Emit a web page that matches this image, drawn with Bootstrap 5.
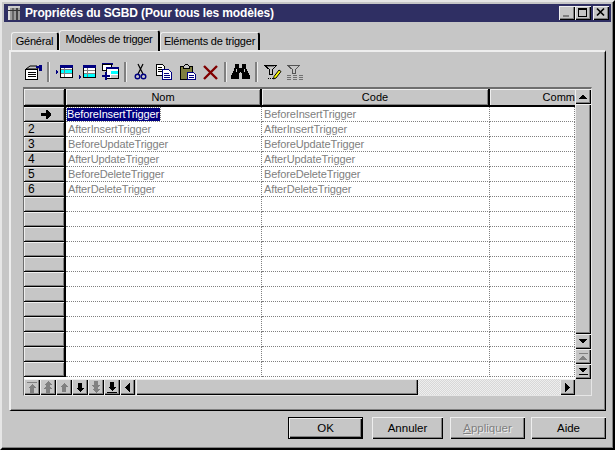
<!DOCTYPE html>
<html lang="fr"><head><meta charset="utf-8"><title>Propriétés du SGBD</title>
<link rel="stylesheet" href="https://cdn.jsdelivr.net/npm/bootstrap@5.3.0/dist/css/bootstrap.min.css">
<style>
html,body{margin:0;width:615px;height:450px;overflow:hidden;background:#c6c6c6}
body{font-family:"Liberation Sans",Arial,sans-serif;font-size:11px;line-height:13px;color:#000}
svg{display:block;shape-rendering:crispEdges}
.dlg{width:615px;height:450px;background:#c6c6c6;border-style:solid;border-width:2px;border-color:#e6e6e6 #000 #000 #e6e6e6;box-shadow:inset -1px -1px 0 #808080;padding:2px 2px 0 2px}
.capt{height:18px;background:#2f2f63;color:#fff;font-weight:700;font-size:12px;letter-spacing:-.14px;padding-left:3px;gap:4px}
.wbtns{margin-left:auto;margin-right:2px;gap:0}
.wb{width:16px;height:14px;background:#c6c6c6;box-shadow:inset 1px 1px 0 #eee,inset -1px -1px 0 #000,inset -2px -2px 0 #808080;padding:0;border:0;border-radius:0}
.wb.gapx{margin-left:2px}
.tabsx{margin:7px 0 0 7px;height:21px;border:0;align-items:flex-end;gap:0;flex-wrap:nowrap}
.tabsx .nav-link{font-size:11px;letter-spacing:-.22px;white-space:nowrap;line-height:13px;color:#000;background:#c6c6c6;border-radius:3px 3px 0 0;border:0;border-left:1px solid #eee;border-top:1px solid #eee;border-right:2px solid #000;margin:0;padding:2px 0 0 0;height:18px;text-align:center;display:block}
.tabsx .nav-link.active{color:#000;background:#c6c6c6;height:21px;padding-top:2px;margin-bottom:-1px;position:relative;z-index:2;border-left:1px solid #eee;border-top:1px solid #eee;border-right:2px solid #000;border-bottom:0}
.t1{width:48px}.t2{width:101px}.t3{width:100px}
.pane{width:597px;height:361px;margin-left:5px;border-style:solid;border-width:2px 1px 1px 2px;border-color:#eee #000 #000 #eee;box-shadow:inset -1px -1px 0 #808080;padding:6px 13px 0 12px}
.tbar{height:28px;align-items:center;margin-left:-2px}
.ti{width:23px;height:18px;padding:0;border:0;background:none;border-radius:0}
.tsep{width:8px;height:20px}
.tsep::after{content:"";display:block;width:2px;height:20px;margin:0 auto;background:#808080;box-shadow:1px 0 0 #eee}
.gridf{width:569px;height:309px;margin-top:1px;border-style:solid;border-width:2px 1px 1px 1px;border-color:#6e6e6e #e6e6e6 #e6e6e6 #6e6e6e}
.gclip{width:551px;height:290px;overflow:hidden;background:#fff}
table.gt{table-layout:fixed;width:551px;border-collapse:separate;border-spacing:0;margin:0;font-size:11px}
table.gt th,table.gt td{padding:0 0 0 2px;overflow:hidden;white-space:nowrap;font-weight:400}
table.gt thead th{height:18px;background:#c6c6c6;text-align:center;border-right:2px solid #000;border-bottom:2px solid #000;box-shadow:inset 1px 1px 0 #eee,inset -1px -1px 0 #808080;font-size:11px;padding:0}
table.gt thead th.lastc{text-align:right;border-right:0;box-shadow:inset 1px 1px 0 #eee}
table.gt tbody td{height:15px;color:#808080;border-right:1px dotted #808080;border-bottom:1px dotted #808080;background:#fff;font-size:11px;letter-spacing:-.12px}
table.gt tbody th{height:15px;background:#c6c6c6;border-right:2px solid #000;border-bottom:1px solid #000;box-shadow:inset 1px 1px 0 #eee,inset -1px -1px 0 #808080;padding-left:4px;font-size:12px;color:#000}
.sel{background:#000080;color:#fff;display:inline-block;padding:0 1px 0 0;margin-left:-1px;outline:1px dotted #808080}
.vsb{width:16px;height:290px;background:#c6c6c6}
.sbb{background:#c6c6c6;box-shadow:inset 1px 1px 0 #eee,inset -1px -1px 0 #000,inset -2px -2px 0 #808080;display:flex;align-items:center;justify-content:center;flex:none;border:0;padding:0;border-radius:0}
.v15{width:16px;height:15px}
.vthumb{width:16px;flex:1;box-shadow:inset 1px 1px 0 #eee,inset -1px -1px 0 #000,inset -2px -2px 0 #808080}
.hsb{height:16px;width:567px}
.h16{width:16px;height:16px}
.hthumb{width:282px;height:16px;margin-left:1px;box-shadow:inset 1px 1px 0 #eee,inset -1px -1px 0 #000,inset -2px -2px 0 #808080}
.htrack{width:142px;height:16px;background-color:#e6e6e6;background-image:conic-gradient(#eee 25%,#d8d8d8 0 50%,#eee 0 75%,#d8d8d8 0);background-size:2px 2px}
.foot{margin-top:6px;height:22px;padding-left:284px;gap:0}
.fb{height:22px;font-size:11.5px;line-height:13px;color:#000;background:#c6c6c6;border:0;border-radius:0;padding:0;box-shadow:inset 1px 1px 0 #eee,inset -1px -1px 0 #000,inset -2px -2px 0 #808080}
.fb:disabled{opacity:1;background:#c6c6c6;color:#808080;text-shadow:1px 1px 0 #eee;border:0}
.fok{box-shadow:0 0 0 1px #000,inset 1px 1px 0 #eee,inset -1px -1px 0 #000,inset -2px -2px 0 #808080;width:73px;margin:1px 10px 0 1px;height:20px}
.fa{width:71px;margin-right:7px}.fp{width:75px;margin-right:6px}.fh{width:75px}
</style></head><body>
<div class="dlg d-flex flex-column">
 <div class="capt d-flex align-items-center">
  <svg width="14" height="16" viewBox="0 0 14 16"><rect x="1" y="2" width="12" height="13" fill="#9a9a9a"/><rect x="1" y="2" width="2" height="13" fill="#ddd"/><rect x="5" y="2" width="2" height="13" fill="#666"/><rect x="9" y="2" width="2" height="13" fill="#444"/><rect x="1" y="1" width="12" height="2" fill="#ccc"/><rect x="1" y="5" width="12" height="1" fill="#333"/></svg>
  <span>Propriétés du SGBD (Pour tous les modèles)</span>
  <div class="wbtns d-flex">
   <button class="wb d-flex" aria-label="min"><svg width="14" height="12"><rect x="4" y="9" width="6" height="2" fill="#808080"/></svg></button>
   <button class="wb d-flex" aria-label="max"><svg width="14" height="12"><rect x="3.500" y="2.500" width="8" height="8" fill="none" stroke="#000"/><rect x="3" y="2" width="9" height="2" fill="#000"/></svg></button>
   <button class="wb d-flex gapx" aria-label="fermer"><svg width="14" height="12" style="shape-rendering:auto"><path d="M4 2.500l7 7M11 2.500l-7 7" stroke="#000" stroke-width="1.7"/></svg></button>
  </div>
 </div>
 <ul class="nav nav-tabs tabsx">
  <li class="nav-item"><a class="nav-link t1" href="#">Général</a></li>
  <li class="nav-item"><a class="nav-link active t2" href="#">Modèles de trigger</a></li>
  <li class="nav-item"><a class="nav-link t3" href="#">Eléments de trigger</a></li>
 </ul>
 <div class="pane">
  <div class="tbar d-flex">
   <button class="ti" aria-label="propriétés"><svg width="23" height="18"><path d="M4.500 6.500h12v10h-12z" fill="#fff" stroke="#000"/><path d="M7 9h8M7 11h8M7 13h8" stroke="#000"/><path d="M5 6l4-3h7l1 3z" fill="#c6c6c6" stroke="#000" style="shape-rendering:auto"/><rect x="18" y="2" width="3" height="6" fill="#000080"/><rect x="15" y="3" width="3" height="2" fill="#000080"/></svg></button>
   <div class="tsep"></div>
   <button class="ti" aria-label="insérer"><svg width="23" height="18"><path d="M4 7l2 2-2 2z" fill="#000080"/><rect x="8.500" y="2.500" width="12" height="12" fill="#fff" stroke="#000"/><rect x="8" y="2" width="13" height="3" fill="#000080"/><rect x="9" y="7" width="11" height="3" fill="#0ff"/><path d="M9 6h11M9 10h11M12 5v9" stroke="#808080"/></svg></button>
   <button class="ti" aria-label="ajouter"><svg width="23" height="18"><path d="M4 12l2 2-2 2z" fill="#000080"/><rect x="8.500" y="2.500" width="12" height="12" fill="#fff" stroke="#000"/><rect x="8" y="2" width="13" height="3" fill="#000080"/><rect x="9" y="11" width="11" height="3" fill="#0ff"/><path d="M9 7h11M9 10h11M12 5v9" stroke="#808080"/></svg></button>
   <button class="ti" aria-label="ajouter plusieurs"><svg width="23" height="18"><rect x="4" y="0" width="11" height="2" fill="#000080"/><rect x="4.500" y="1.500" width="9" height="6" fill="#fff" stroke="#000"/><rect x="8.500" y="4.500" width="12" height="11" fill="#fff" stroke="#000"/><rect x="8" y="4" width="13" height="2" fill="#000080"/><rect x="13" y="8" width="7" height="3" fill="#0ff"/><rect x="13" y="12" width="7" height="3" fill="#c6c6c6"/><rect x="4" y="12" width="8" height="2" fill="#000080"/><rect x="7" y="9" width="2" height="8" fill="#000080"/></svg></button>
   <div class="tsep"></div>
   <button class="ti" aria-label="couper"><svg width="23" height="18" style="shape-rendering:auto"><path d="M9 1l5 10M14 1l-5 10" stroke="#000" stroke-width="1.200" fill="none"/><circle cx="8.500" cy="13.500" r="2.300" fill="none" stroke="#000080" stroke-width="1.400"/><circle cx="14.500" cy="13.500" r="2.300" fill="none" stroke="#000080" stroke-width="1.400"/></svg></button>
   <button class="ti" aria-label="copier"><svg width="23" height="18"><path d="M4.500 1.500h6l2 2v9h-8z" fill="#fff" stroke="#000"/><path d="M6 4h4M6 6h4M6 8h4" stroke="#000"/><path d="M10.500 6.500h6l3 3v7h-9z" fill="#fff" stroke="#000080"/><path d="M12 10h5M12 12h6M12 14h6" stroke="#000080"/></svg></button>
   <button class="ti" aria-label="coller"><svg width="23" height="18"><rect x="5.500" y="3.500" width="12" height="13" fill="#808040" stroke="#000"/><path d="M8.500 3.500l2-2h2l2 2v2h-6z" fill="#c6c6c6" stroke="#000"/><path d="M12.500 9.500h6l2 2v5h-8z" fill="#fff" stroke="#000080"/><path d="M14 12h5M14 14h5" stroke="#000080"/></svg></button>
   <button class="ti" aria-label="supprimer"><svg width="23" height="18" style="shape-rendering:auto"><path d="M6 3l13 13M19 3l-13 13" stroke="#800000" stroke-width="2.400"/></svg></button>
   <div class="tsep"></div>
   <button class="ti" aria-label="chercher"><svg width="23" height="18"><path d="M6 1h4v4h3v-4h4v3l1 3 3 6v3h-8v-6h-1v-1h-1v1h-1v6h-8v-3l3-6 1-3z" fill="#000"/><rect x="7" y="6" width="1" height="3" fill="#c6c6c6"/><rect x="15" y="6" width="1" height="3" fill="#c6c6c6"/></svg></button>
   <div class="tsep"></div>
   <button class="ti" aria-label="filtrer"><svg width="23" height="18"><path d="M4.500 2.500h12l-4 4v5h-3v-5z" fill="#c6c6c6" stroke="#000"/><path d="M7 3h7" stroke="#808080"/><path d="M8 15h1M10 15h1M12 15h1" stroke="#000"/><path d="M19 7l2 1.500-5 6.500-2.500 1 .5-2.500z" fill="#ff0" stroke="#000" style="shape-rendering:auto"/></svg></button>
   <button class="ti" aria-label="filtre"><svg width="23" height="18"><path d="M4.500 2.500h12l-4 4v4h-3v-4z" fill="#c6c6c6" stroke="#555"/><path d="M4 12h4M10 12h4M16 12h4M4 14h4M10 14h4M16 14h4M4 16h4M10 16h4M16 16h4" stroke="#707070"/></svg></button>
  </div>
  <div class="gridf">
   <div class="d-flex">
    <div class="gclip">
     <table class="gt">
      <colgroup><col style="width:42px"><col style="width:196px"><col style="width:228px"><col style="width:85px"></colgroup>
      <thead><tr><th></th><th>Nom</th><th>Code</th><th class="lastc">Comm</th></tr></thead>
      <tbody>
       <tr><th class="text-center"><svg class="mx-auto" width="10" height="9"><path d="M0 3h5V0l1 0 4 4v1L6 9H5V6H0z" fill="#000"/></svg></th><td><span class="sel">BeforeInsertTrigger</span></td><td>BeforeInsertTrigger</td><td></td></tr>
       <tr><th>2</th><td>AfterInsertTrigger</td><td>AfterInsertTrigger</td><td></td></tr>
       <tr><th>3</th><td>BeforeUpdateTrigger</td><td>BeforeUpdateTrigger</td><td></td></tr>
       <tr><th>4</th><td>AfterUpdateTrigger</td><td>AfterUpdateTrigger</td><td></td></tr>
       <tr><th>5</th><td>BeforeDeleteTrigger</td><td>BeforeDeleteTrigger</td><td></td></tr>
       <tr><th>6</th><td>AfterDeleteTrigger</td><td>AfterDeleteTrigger</td><td></td></tr>
       <tr><th></th><td></td><td></td><td></td></tr><tr><th></th><td></td><td></td><td></td></tr>
       <tr><th></th><td></td><td></td><td></td></tr><tr><th></th><td></td><td></td><td></td></tr>
       <tr><th></th><td></td><td></td><td></td></tr><tr><th></th><td></td><td></td><td></td></tr>
       <tr><th></th><td></td><td></td><td></td></tr><tr><th></th><td></td><td></td><td></td></tr>
       <tr><th></th><td></td><td></td><td></td></tr><tr><th></th><td></td><td></td><td></td></tr>
       <tr><th></th><td></td><td></td><td></td></tr><tr><th></th><td></td><td></td><td></td></tr>
      </tbody>
     </table>
    </div>
    <div class="vsb d-flex flex-column">
     <button class="sbb v15" aria-label="haut"><svg width="8" height="5"><path d="M4 0l4 5H0z" fill="#000"/></svg></button>
     <div class="vthumb"></div>
     <button class="sbb v15" aria-label="bas"><svg width="8" height="5"><path d="M0 0h8L4 5z" fill="#000"/></svg></button>
     <button class="sbb v15" aria-label="début"><svg width="9" height="7"><path d="M0 0h9v1H0zM4 2l4 5H0z" fill="#808080"/></svg></button>
     <button class="sbb v15" aria-label="fin"><svg width="9" height="7"><path d="M0 0h8L4 5zM0 6h9v1H0z" fill="#000"/></svg></button>
    </div>
   </div>
   <div class="hsb d-flex">
    <button class="sbb h16" aria-label="premier"><svg width="10" height="11"><path d="M0 0h10v1H0zM5 2l4 4H7v5H3V6H1z" fill="#808080"/></svg></button>
    <button class="sbb h16" aria-label="page préc"><svg width="10" height="12"><path d="M5 0l4 4H7v1l2 3H7v4H3V8H1l2-3V4H1z" fill="#808080"/></svg></button>
    <button class="sbb h16" aria-label="préc"><svg width="10" height="9"><path d="M5 0l4 4H7v5H3V4H1z" fill="#808080"/></svg></button>
    <button class="sbb h16" aria-label="suiv"><svg width="10" height="9"><path d="M3 0h4v5h2L5 9 1 5h2z" fill="#000"/></svg></button>
    <button class="sbb h16" aria-label="page suiv"><svg width="10" height="12"><path d="M3 0h4v4h2L7 7v1h2l-4 4-4-4h2V7L1 4h2z" fill="#808080"/></svg></button>
    <button class="sbb h16" aria-label="dernier"><svg width="10" height="11"><path d="M3 0h4v5h2L5 9 1 5h2zM0 10h10v1H0z" fill="#000"/></svg></button>
    <button class="sbb" style="width:15px;height:16px" aria-label="gauche"><svg width="5" height="9"><path d="M5 0v9L0 4.500z" fill="#000"/></svg></button>
    <div class="hthumb"></div>
    <div class="htrack"></div>
    <button class="sbb" style="width:15px;height:16px" aria-label="droite"><svg width="5" height="9"><path d="M0 0v9l5-4.500z" fill="#000"/></svg></button>
   </div>
  </div>
 </div>
 <div class="foot d-flex">
  <button class="btn fb fok">OK</button>
  <button class="btn fb fa">Annuler</button>
  <button class="btn fb fp" disabled><u>A</u>ppliquer</button>
  <button class="btn fb fh">Aide</button>
 </div>
</div>
</body></html>
